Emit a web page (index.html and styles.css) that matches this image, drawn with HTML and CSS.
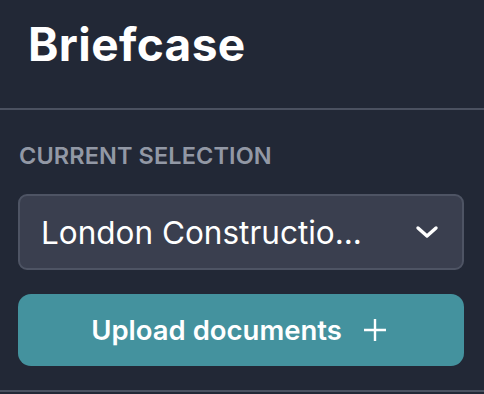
FILE: index.html
```html
<!DOCTYPE html>
<html lang="en">
<head>
<meta charset="UTF-8" />
<meta name="viewport" content="width=device-width, initial-scale=1" />
<title>Briefcase</title>
<link rel="stylesheet" href="styles.css">
</head>
<body>
  <aside class="sidebar">
    <header class="sidebar-head">
      <h1>Briefcase</h1>
    </header>

    <section class="selection">
      <div class="label">Current selection</div>
      <button class="picker" type="button">
        <span class="picker-text">London Constructio...</span>
        <svg class="chevron" viewBox="0 0 24 14" width="24" height="14" aria-hidden="true">
          <path d="M3 3l9 8 9-8" fill="none" stroke="#fff" stroke-width="3.4" stroke-linecap="round" stroke-linejoin="round"/>
        </svg>
      </button>
      <button class="upload" type="button">
        Upload documents
        <svg class="plus" viewBox="0 0 22 22" width="22" height="22" aria-hidden="true">
          <path d="M11 0v22M0 11h22" stroke="#fff" stroke-width="2.4"/>
        </svg>
      </button>
    </section>
  </aside>
</body>
</html>
```

FILE: styles.css
```css
body {
  margin: 0;
  background: #222836;
  font-family: Inter, "Noto Sans", sans-serif;
  color: #fff;
}

.sidebar {
  width: 484px;
  height: 394px;
  overflow: hidden;
}

/* Title bar */
.sidebar-head {
  height: 110px;
  border-bottom: 2px solid #4b5160;
  box-sizing: border-box;
  padding: 20px 0 0 28px;
}
.sidebar-head h1 {
  margin: 0;
  font-size: 46px;
  font-weight: 700;
  line-height: 48px;
  letter-spacing: 0.4px;
}

/* Selection block */
.selection {
  padding: 33px 20px 24px 18px;
  border-bottom: 2px solid #4b5160;
  display: flex;
  flex-direction: column;
}
.label {
  font-size: 23.5px;
  font-weight: 600;
  color: #9298a5;
  text-transform: uppercase;
  line-height: 26px;
  margin-left: 1px;
  margin-bottom: 25px;
  letter-spacing: 0.1px;
}

.picker {
  height: 76px;
  background: #3a3f4f;
  border: 2px solid #4e5464;
  border-radius: 9px;
  padding: 0 23px 0 21px;
  display: flex;
  align-items: center;
  justify-content: space-between;
  font-family: inherit;
  color: #fff;
  cursor: pointer;
}
.picker-text {
  font-size: 31.5px;
  font-weight: 400;
}
.chevron {
  width: 24px;
  height: 14px;
}

.upload {
  margin-top: 24px;
  height: 72px;
  border: none;
  border-radius: 13px;
  background: #44929e;
  color: #fff;
  font-family: inherit;
  font-size: 27.5px;
  font-weight: 600;
  display: flex;
  align-items: center;
  justify-content: center;
  gap: 22px;
  padding: 0 5px 0 0;
  cursor: pointer;
}
```
